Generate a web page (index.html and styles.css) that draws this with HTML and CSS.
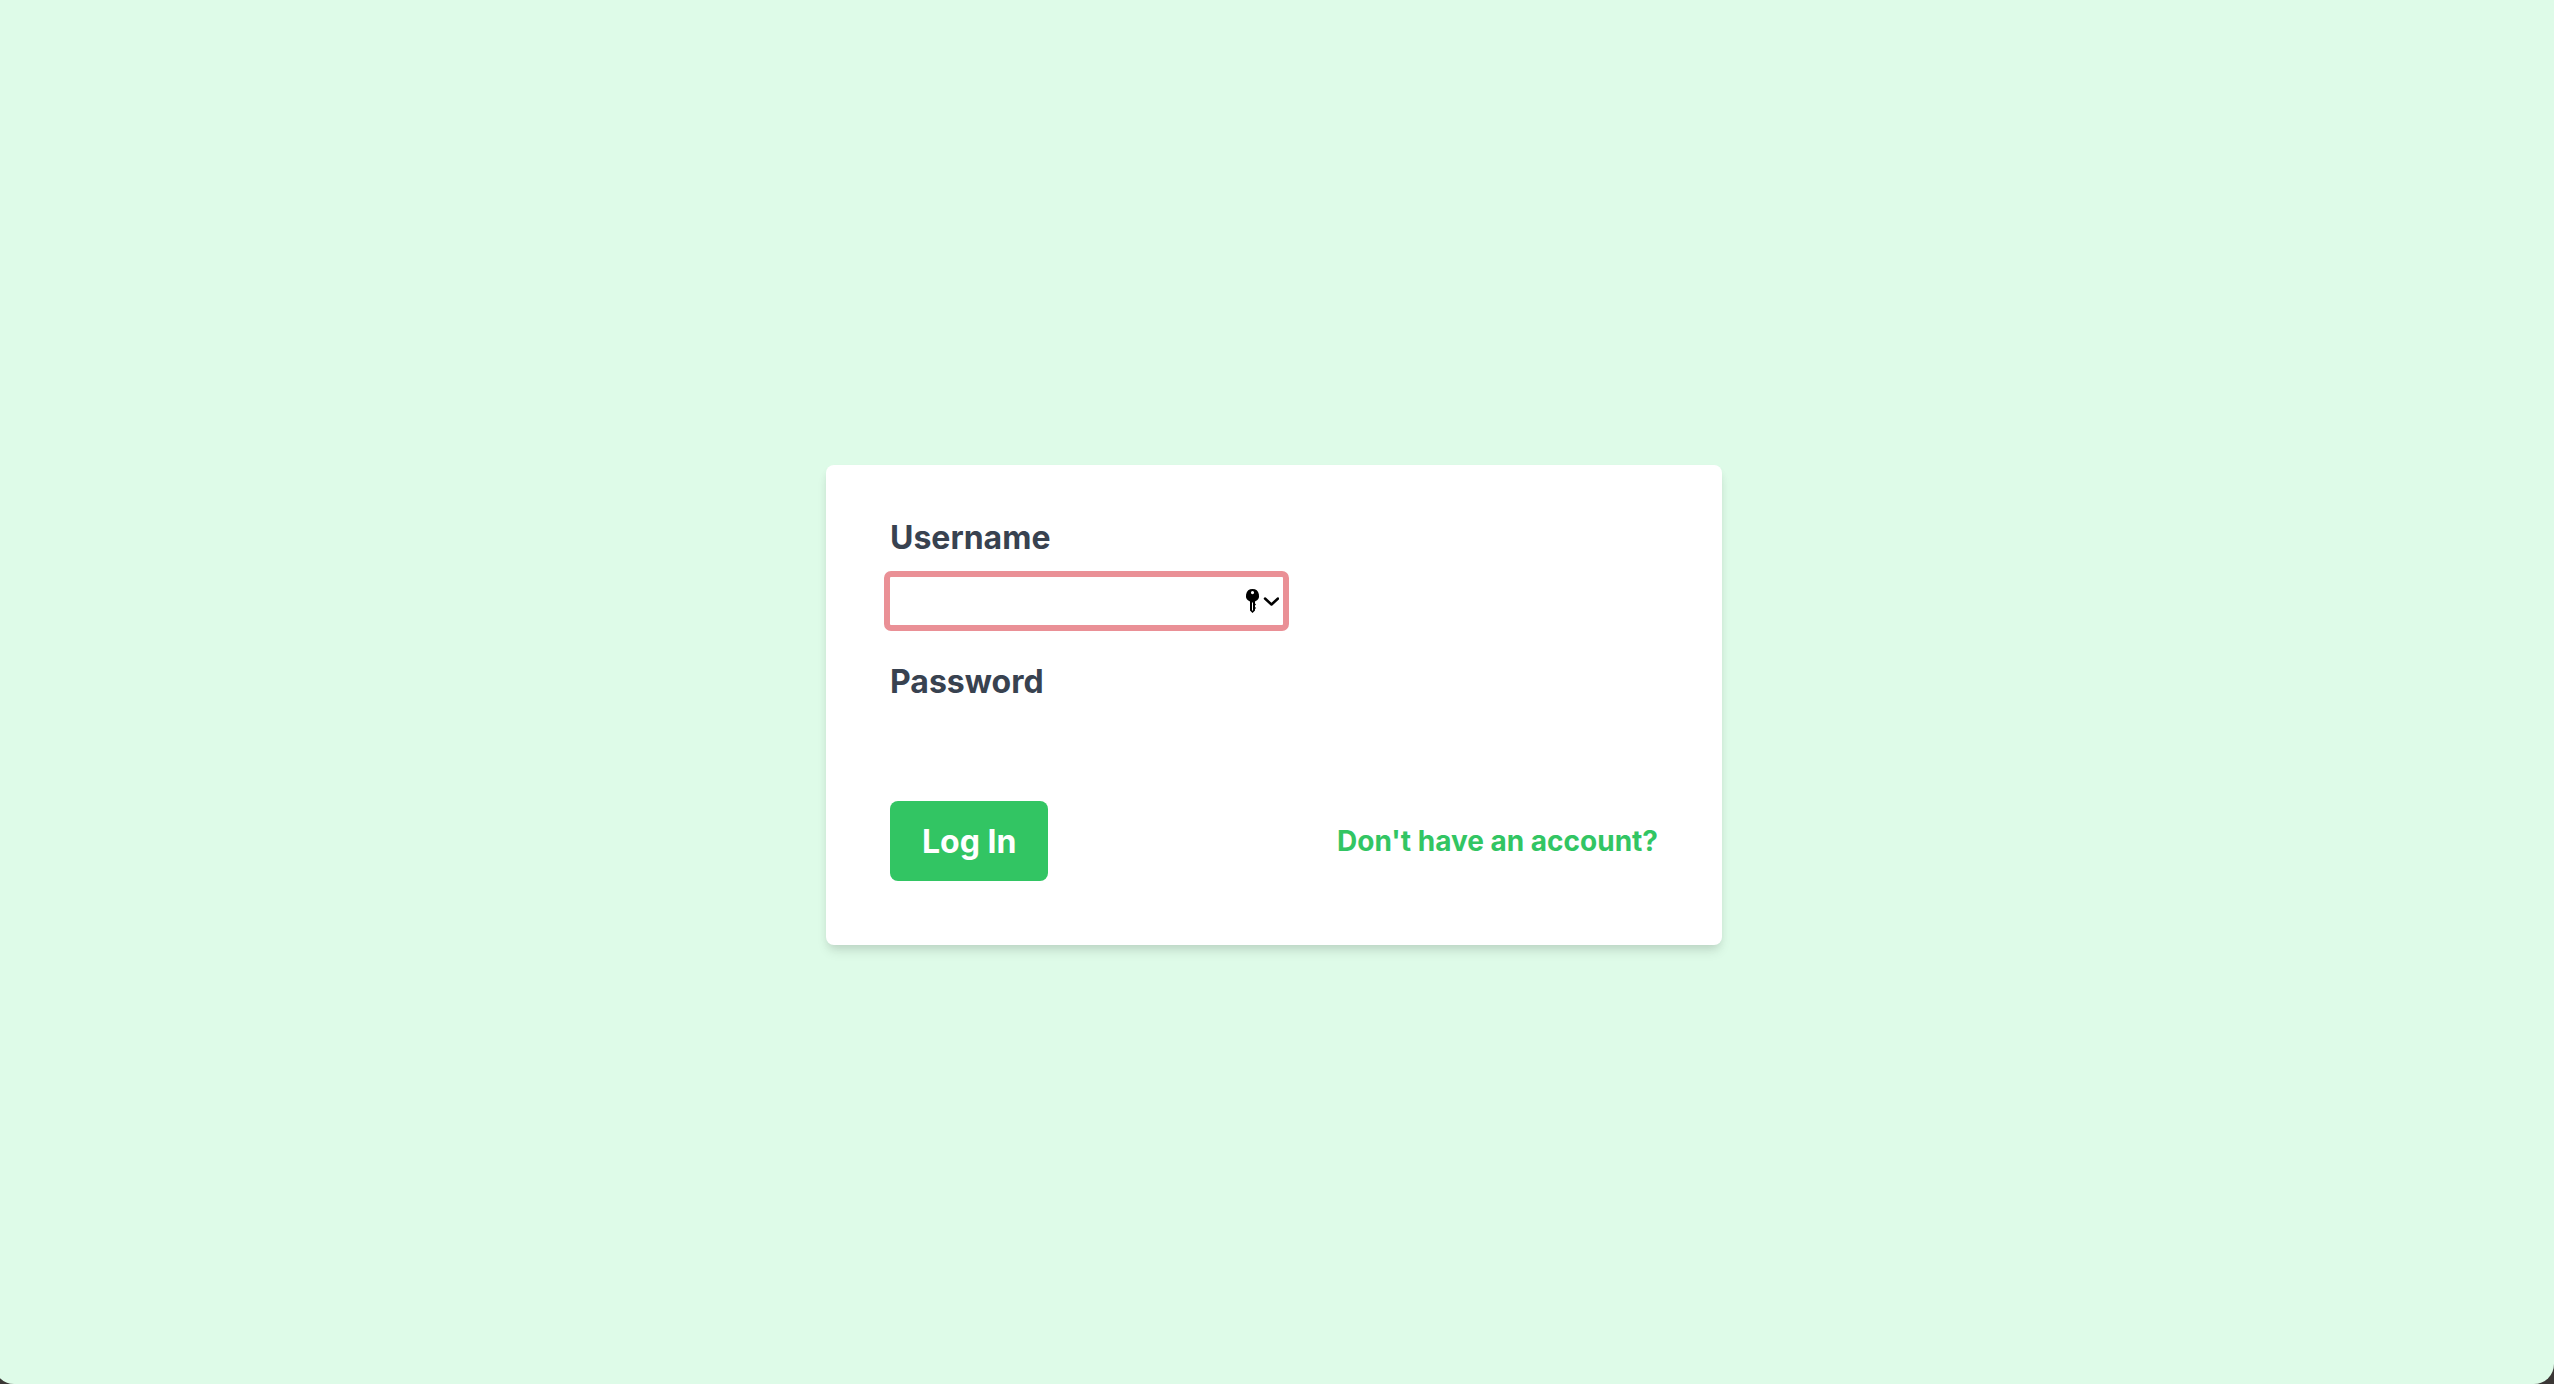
FILE: index.html
```html
<!DOCTYPE html>
<html lang="en">
<head>
  <meta charset="utf-8">
  <title>Log In</title>
  <link rel="stylesheet" href="styles.css">
</head>
<body>
  <main class="screen">
    <form class="card">
      <div class="field">
        <label class="label" for="username">Username</label>
        <div class="control control-active">
          <input class="input" id="username" name="username" type="text" autocomplete="username">
          <button class="autofill" type="button" aria-label="Saved passwords">
            <svg width="34" height="24" viewBox="0 0 34 24" fill="none">
              <path fill="#000" fill-rule="evenodd" d="M7.500 0A6.500 6.500 0 0 0 5 12.500V21.500L7.500 24L10 21.500V20L11 19L10 18V16.500L11 15.500L10 14.500V12.500A6.500 6.500 0 0 0 7.500 0ZM7.500 2A1.600 1.600 0 1 1 7.500 5.200A1.600 1.600 0 0 1 7.500 2ZM7 13.500H8V21.500H7Z"/>
              <path stroke="#000" stroke-width="2.500" stroke-linecap="round" stroke-linejoin="round" d="M20 9.500L26.500 15.500L33 9.500"/>
            </svg>
          </button>
        </div>
      </div>
      <div class="field">
        <label class="label" for="password">Password</label>
        <div class="control">
          <input class="input" id="password" name="password" type="password" autocomplete="current-password">
        </div>
      </div>
      <div class="actions">
        <button class="submit" type="submit">Log In</button>
        <a class="link" href="#signup">Don't have an account?</a>
      </div>
    </form>
  </main>
</body>
</html>
```
FILE: styles.css
```css
* {
  box-sizing: border-box;
}

html {
  background: #3a3735;
}

body {
  margin: 0;
  overflow-x: hidden;
  font-family: Inter, "Liberation Sans", sans-serif;
  font-size: 32px;
  line-height: 48px;
}

.screen {
  display: flex;
  align-items: center;
  justify-content: center;
  min-height: 100vh;
  margin-left: -6px;
  padding-top: 26px;
  border-radius: 0 0 20px 20px;
  background: #defbe8;
}

.card {
  display: flex;
  flex-direction: column;
  gap: 32px;
  width: 100%;
  max-width: 896px;
  padding: 48px 64px 64px;
  border-radius: 8px;
  background: #fff;
  box-shadow: 0 8px 12px -2px rgba(0, 0, 0, 0.1), 0 4px 8px -2px rgba(0, 0, 0, 0.08);
}

.field {
  display: flex;
  flex-direction: column;
  align-items: flex-start;
  gap: 16px;
}

.label {
  padding-top: 2px;
  color: #384250;
  font-weight: 650;
  line-height: 46px;
}

.control {
  display: flex;
  align-items: center;
  width: 393px;
  max-width: 100%;
  height: 48px;
  padding-right: 4px;
}

.control-active {
  border-radius: 1px;
  outline: 6px solid #ea9096;
}

.input {
  flex: 1;
  min-width: 0;
  height: 100%;
  padding: 0;
  border: 0;
  outline: 0;
  background: transparent;
  font: inherit;
}

.autofill {
  display: flex;
  padding: 0;
  border: 0;
  background: transparent;
}

.actions {
  display: flex;
  align-items: center;
  justify-content: space-between;
}

.submit {
  padding: 17px 32px 15px;
  border: 0;
  border-radius: 8px;
  background: #32c563;
  color: #fff;
  font: inherit;
  font-weight: 700;
}

.link {
  color: #32c563;
  font-size: 28px;
  font-weight: 700;
  text-decoration: none;
}
```
